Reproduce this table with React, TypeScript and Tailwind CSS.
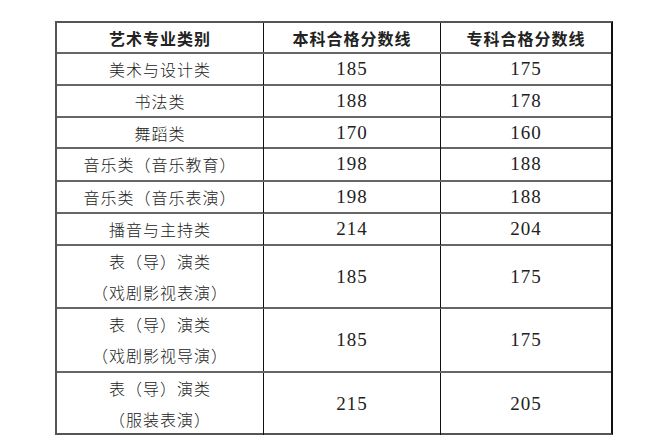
import React from "react";

type Row = { name: string[]; a: string; b: string; h: number };

const rows: Row[] = [
  { name: ["美术与设计类"], a: "185", b: "175", h: 32 },
  { name: ["书法类"], a: "188", b: "178", h: 32 },
  { name: ["舞蹈类"], a: "170", b: "160", h: 31 },
  { name: ["音乐类（音乐教育）"], a: "198", b: "188", h: 33 },
  { name: ["音乐类（音乐表演）"], a: "198", b: "188", h: 32 },
  { name: ["播音与主持类"], a: "214", b: "204", h: 32 },
  { name: ["表（导）演类", "（戏剧影视表演）"], a: "185", b: "175", h: 63 },
  { name: ["表（导）演类", "（戏剧影视导演）"], a: "185", b: "175", h: 64 },
  { name: ["表（导）演类", "（服装表演）"], a: "215", b: "205", h: 62 },
];

const cjk = { fontFamily: '"Noto Sans CJK SC", "Noto Sans", sans-serif' };
const serif = { fontFamily: '"Liberation Serif", "Noto Sans CJK SC", serif' };

export default function App() {
  return (
    <div className="w-[660px] h-[445px] bg-white pt-[21px] pl-[55px]">
      <div className="w-[558px] border-2 border-[#555] border-r-[#111] text-[#222]">
        <div className="grid grid-cols-[207px_177px_170px] h-[31px] border-b-2 border-[#666]" style={cjk}>
          <div className="flex items-center justify-center border-r border-[#111] text-[16px] font-bold tracking-[1px]">艺术专业类别</div>
          <div className="flex items-center justify-center border-r border-[#111] text-[16px] font-bold tracking-[1px]">本科合格分数线</div>
          <div className="flex items-center justify-center text-[16px] font-bold tracking-[1px]">专科合格分数线</div>
        </div>
        {rows.map((r, i) => (
          <div
            key={i}
            className={`grid grid-cols-[207px_177px_170px] ${i < rows.length - 1 ? "border-b-2 border-[#666]" : ""}`}
            style={{ height: i < rows.length - 1 ? r.h : r.h - 2 }}
          >
            <div className="flex flex-col items-center justify-center border-r border-[#111] text-[16px] font-light tracking-[1px] leading-[31px]" style={cjk}>
              {r.name.map((n, j) => (
                <span key={j}>{n}</span>
              ))}
            </div>
            <div className="flex items-center justify-center border-r border-[#111] text-[19px] tracking-[1px]" style={serif}>{r.a}</div>
            <div className="flex items-center justify-center text-[19px] tracking-[1px]" style={serif}>{r.b}</div>
          </div>
        ))}
      </div>
    </div>
  );
}
